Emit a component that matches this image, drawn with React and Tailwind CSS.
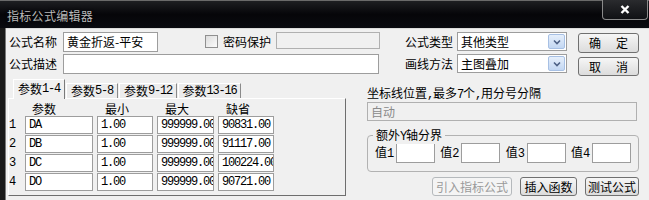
import React from 'react';

const cjk = "font-['Noto_Sans_CJK_SC',sans-serif]";
const mono = "font-['Liberation_Mono','Noto_Sans_CJK_SC',monospace]";

// ASCII run in the narrow half-width look of the old dialog font
const A = ({ children }) => (
  <span className={`${mono} tracking-[-1.2px]`}>{children}</span>
);

const Box = ({ className = '', disabled, children }) => (
  <div
    className={`flex items-center overflow-hidden whitespace-nowrap border px-[3px] text-[12px] leading-[12px] ${
      disabled ? 'border-[#b0b0b0] bg-[#f0f0f0] text-[#8a8a8a]' : 'border-[#9d9d9d] bg-white text-black'
    } ${className}`}
  >
    {children}
  </div>
);

const Select = ({ value }) => (
  <div className="flex h-[19px] w-[110px] items-center border border-[#9d9d9d] bg-white pl-[3px]">
    <span className="flex-1 text-[12px] leading-[12px]">{value}</span>
    <div className="mr-[1px] flex h-[15px] w-[17px] items-center justify-center rounded-[2px] border border-[#a7c0e4] bg-gradient-to-b from-[#e6effb] to-[#c3d7f2]">
      <svg width="8" height="6" viewBox="0 0 8 6">
        <path d="M1 1.5 L4 4.5 L7 1.5" fill="none" stroke="#4d6185" strokeWidth="1.6" />
      </svg>
    </div>
  </div>
);

const Button = ({ className = '', disabled, children }) => (
  <div
    className={`flex items-center justify-center rounded-[3px] border text-[12px] leading-[12px] ${
      disabled
        ? 'border-[#b5b9bc] bg-[#f4f4f4] text-[#9a9a9a]'
        : 'border-[#707070] bg-gradient-to-b from-[#f6f6f6] to-[#dcdcdc] text-black'
    } ${className}`}
  >
    {children}
  </div>
);

const params = [
  ['1', 'DA', '1.00', '999999.00', '90831.00'],
  ['2', 'DB', '1.00', '999999.00', '91117.00'],
  ['3', 'DC', '1.00', '999999.00', '100224.00'],
  ['4', 'DO', '1.00', '999999.00', '90721.00'],
];

const tabs = [
  ['参数', '1-4', 'w-[52px]'],
  ['参数', '5-8', 'w-[52px]'],
  ['参数', '9-12', 'w-[58px]'],
  ['参数', '13-16', 'w-[63px]'],
];

export default function App() {
  return (
    <div className={`flex h-[200px] w-[649px] flex-col overflow-hidden bg-[#07080c] ${cjk}`}>
      {/* title bar */}
      <div className="flex h-[28px] shrink-0 justify-between border-t border-[#6a6a6a] bg-gradient-to-b from-[#1e1f22] via-[#060609] to-[#0a0b10]">
        <div className="pl-[7px] pt-[8px] text-[12px] leading-[14px] tracking-[0.3px] text-[#b9b9b9] [text-shadow:0_0_3px_#000]">
          指标公式编辑器
        </div>
        <div className="mr-[1px] mt-[-1px] flex h-[20px] w-[46px] items-center justify-center rounded-b-[4px] border border-t-0 border-[#8a8a8a] bg-gradient-to-b from-[#2a2b2e] to-[#101114]">
          <svg width="10" height="9" viewBox="0 0 10 9">
            <path d="M1.5 1 L8.5 8 M8.5 1 L1.5 8" stroke="#fff" strokeWidth="2.4" />
          </svg>
        </div>
      </div>

      <div className="flex flex-1">
        {/* left frame */}
        <div className="w-[6px] shrink-0 border-r border-[#7a7a7a] bg-[#1a1a1a]" />

        {/* client area */}
        <div className="flex-1 border-t border-[#dcdcdc] bg-[#f0f0f0] text-black">
          {/* row 1 */}
          <div className="mt-[3px] flex h-[21px] items-start pl-[3px]">
            <span className="w-[54px] pt-[4px] text-[12px] leading-[12px]">公式名称</span>
            <Box className="h-[20px] w-[95px]">黄金折返-平安</Box>
            <div className="ml-[47px] mt-[3px] h-[13px] w-[13px] border border-[#8f8f8f] bg-gradient-to-br from-[#dcdcdc] to-[#fbfbfb]" />
            <span className="ml-[5px] pt-[4px] text-[12px] leading-[12px]">密码保护</span>
            <Box disabled className="ml-[5px] h-[17px] w-[104px]" />
            <span className="ml-[25px] w-[52px] pt-[4px] text-[12px] leading-[12px]">公式类型</span>
            <Select value="其他类型" />
            <Button className="ml-[11px] mt-[1px] h-[20px] w-[61px] gap-[15px]">
              <span>确</span>
              <span>定</span>
            </Button>
          </div>

          {/* row 2 */}
          <div className="mt-[1px] flex h-[21px] items-start pl-[3px]">
            <span className="w-[54px] pt-[4px] text-[12px] leading-[12px]">公式描述</span>
            <Box className="h-[20px] w-[316px]" />
            <span className="ml-[26px] w-[52px] pt-[4px] text-[12px] leading-[12px]">画线方法</span>
            <Select value="主图叠加" />
            <Button className="ml-[11px] mt-[3px] h-[19px] w-[61px] gap-[15px]">
              <span>取</span>
              <span>消</span>
            </Button>
          </div>

          {/* lower area */}
          <div className="mt-[5px] flex pl-[2px]">
            {/* parameter tabs */}
            <div className="w-[338px]">
              <div className="flex h-[18px] items-end gap-[1px] pl-[5px]">
                {tabs.map(([c, n, w], i) => (
                  <div
                    key={n}
                    className={`${w} flex items-center justify-center whitespace-nowrap border-l border-r border-t text-[12px] leading-[12px] ${
                      i === 0
                        ? 'relative z-10 -mb-[1px] h-[20px] border-l-white border-r-[#7a7a7a] border-t-white bg-[#f0f0f0] pb-[2px]'
                        : 'h-[15px] border-l-white border-r-[#8a8a8a] border-t-white bg-[#ececec]'
                    }`}
                  >
                    {c}
                    <A>{n}</A>
                  </div>
                ))}
              </div>
              <div className="h-[98px] border border-b-[#6e6e6e] border-l-white border-r-[#6e6e6e] border-t-white pl-[0px] pt-[3px]">
                <div className="flex h-[13px] text-[12px] leading-[13px]">
                  <div className="w-[16px]" />
                  <div className="w-[68px] pl-[7px]">参数</div>
                  <div className="ml-[4px] w-[56px] pl-[8px]">最小</div>
                  <div className="ml-[4px] w-[57px] pl-[8px]">最大</div>
                  <div className="ml-[4px] w-[56px] pl-[8px]">缺省</div>
                </div>
                <div className="mt-[1px] flex flex-col gap-[1px]">
                  {params.map(([no, name, min, max, def]) => (
                    <div key={no} className="flex h-[18px] items-center">
                      <div className={`w-[16px] ${mono} text-[12px] leading-[12px]`}>{no}</div>
                      <Box className={`h-[18px] w-[68px] ${mono} tracking-[-1.2px]`}>{name}</Box>
                      <Box className={`ml-[4px] h-[18px] w-[56px] ${mono} tracking-[-1.2px]`}>{min}</Box>
                      <Box className={`ml-[4px] h-[18px] w-[57px] ${mono} tracking-[-1.2px]`}>{max}</Box>
                      <Box className={`ml-[4px] h-[18px] w-[56px] ${mono} tracking-[-1.2px]`}>{def}</Box>
                    </div>
                  ))}
                </div>
              </div>
            </div>

            {/* right side */}
            <div className="ml-[21px] w-[272px] pt-[6px]">
              <div className="h-[14px] text-[12px] leading-[14px]">
                坐标线位置<A>,</A>最多<A>7</A>个<A>,</A>用分号分隔
              </div>
              <Box disabled className="mt-[2px] h-[19px] w-[270px]">
                自动
              </Box>
              <div className="relative mt-[14px] h-[37px] rounded-[4px] border border-[#b2b2b2] px-[7px] pt-[7px]">
                <span className="absolute left-[5px] top-[-8px] bg-[#f0f0f0] px-[3px] text-[12px] leading-[14px]">
                  额外<A>Y</A>轴分界
                </span>
                <div className="flex justify-between">
                  {['1', '2', '3', '4'].map((n) => (
                    <div key={n} className="flex items-center">
                      <span className="text-[12px] leading-[12px]">
                        值<A>{n}</A>
                      </span>
                      <Box className="ml-[3px] h-[20px] w-[39px]" />
                    </div>
                  ))}
                </div>
              </div>
              <div className="mt-[5px] flex justify-end gap-[8px]">
                <Button disabled className="h-[19px] w-[80px]">
                  引入指标公式
                </Button>
                <Button className="h-[19px] w-[57px]">插入函数</Button>
                <Button className="h-[19px] w-[54px]">测试公式</Button>
              </div>
            </div>
          </div>
        </div>
      </div>
    </div>
  );
}
